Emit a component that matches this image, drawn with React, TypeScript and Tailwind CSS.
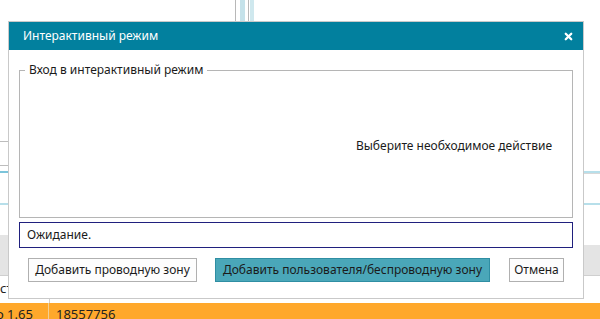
import { X } from 'lucide-react';

const font = { fontFamily: '"Noto Sans", "Open Sans", "Liberation Sans", sans-serif' };

function Backdrop() {
  return (
    <div className="flex h-[319px] w-[600px] flex-col bg-white">
      <div className="flex h-[303px]">
        {/* left grid, mostly hidden by the dialog */}
        <div className="flex w-[50px] flex-col">
          <div className="h-[141px]" />
          <div className="h-[24px] border-t border-[#bdbdbd]" />
          <div className="h-[6px] border-t border-[#bdbdbd]" />
          <div className="h-[32px] border-t-2 border-[#7cc4da]" />
          <div className="h-[32px] border-t-2 border-[#b7dfea]" />
          <div className="h-[41px] border-b border-[#cfcfcf] bg-[#e4e4e4]" />
          <div className="flex-1 border-r border-[#cfcfcf] pt-[4px] text-[13px] leading-[16px] text-[#222]">ст</div>
        </div>
        {/* splitter at top centre */}
        <div className="flex flex-1 justify-center pl-[185px]">
          <div className="flex h-[22px]">
            <div className="w-[1px] bg-[#b8b8b8]" />
            <div className="ml-[4px] w-[5px] bg-[#c5e2ea]" />
            <div className="ml-[3px] w-[1px] bg-[#b8b8b8]" />
            <div className="ml-[1px] w-[4px] bg-[#cfe8ee]" />
          </div>
          <div className="flex-1" />
        </div>
        {/* right grid */}
        <div className="flex w-[40px] flex-col">
          <div className="h-[171px]" />
          <div className="h-[3px] border-t-2 border-[#b7dfea] bg-[#d8d8d8]" />
          <div className="h-[29px]" />
          <div className="h-[42px] border-t-2 border-[#b7dfea]" />
          <div className="h-[31px] border-b border-[#cfcfcf] bg-[#e4e4e4]" />
        </div>
      </div>
      <div className="flex h-[16px] overflow-hidden bg-[#ffa82b] text-[13px] leading-[16px] text-[#222]">
        <div className="w-[49px] overflow-hidden border-r border-[#f3cf94] pt-[3px] whitespace-nowrap">
          <span className="-ml-[4px] inline-block">о 1.65</span>
        </div>
        <div className="pl-[7px] pt-[3px]">18557756</div>
      </div>
    </div>
  );
}

function Dialog() {
  return (
    <div className="absolute left-[8px] top-[21px] flex h-[278px] w-[576px] flex-col border border-[#c9c9c9] bg-white text-[12px] text-[#1b1b1b]">
      <div className="flex h-[28px] items-center justify-between bg-[#02809e] pl-[14px] pr-[9px] text-white">
        <span>Интерактивный режим</span>
        <X className="h-[11px] w-[11px]" strokeWidth={5} />
      </div>
      <div className="flex flex-col px-[10px]">
        <fieldset className="mt-[12px] border border-[#b5b5b5] p-0">
          <legend className="ml-[5px] px-[4px] leading-[16px]">Вход в интерактивный режим</legend>
          <div className="flex h-[139px] items-center justify-end whitespace-nowrap pr-[20px] pb-[4px]">
            Выберите необходимое действие
          </div>
        </fieldset>
        <div className="mt-[4px] flex h-[26px] items-center border border-[#20207e] px-[7px]">Ожидание.</div>
        <div className="mt-[10px] flex items-center whitespace-nowrap pl-[9px]">
          <button className="h-[24px] w-[169px] border border-[#b0b0b0] bg-[#fdfdfd]">Добавить проводную зону</button>
          <button className="ml-[18px] h-[24px] w-[275px] border border-[#2f8ea3] bg-[#4aa7b9]">
            Добавить пользователя/беспроводную зону
          </button>
          <button className="ml-[19px] h-[24px] w-[55px] border border-[#b0b0b0] bg-[#fdfdfd]">Отмена</button>
        </div>
      </div>
    </div>
  );
}

export default function App() {
  return (
    <div className="relative h-[319px] w-[600px] overflow-hidden" style={font}>
      <Backdrop />
      <Dialog />
    </div>
  );
}
